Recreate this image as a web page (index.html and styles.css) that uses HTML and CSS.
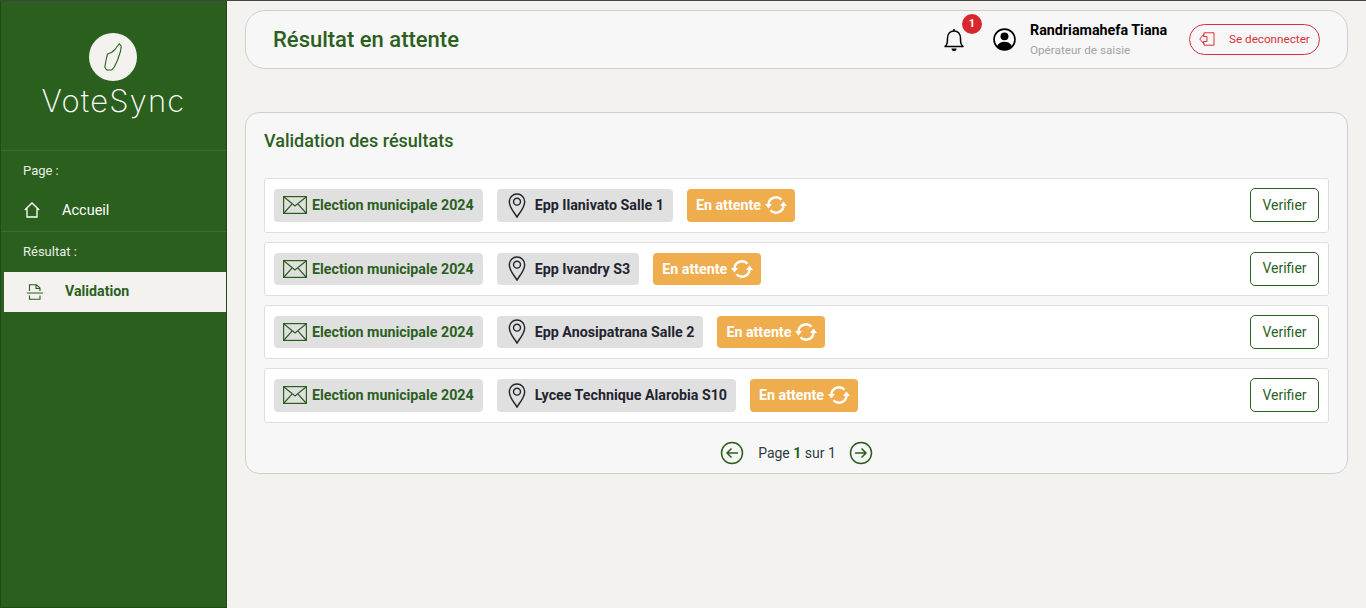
FILE: index.html
```html
<!DOCTYPE html>
<html lang="fr">
<head>
    <meta charset="UTF-8">
    <meta name="viewport" content="width=device-width, initial-scale=1.0">
    <title>VoteSync - Résultat en attente</title>
    <link rel="stylesheet" href="styles.css">
</head>
<body>
    <svg class="icon-defs" width="0" height="0">
        <symbol id="i-mail" viewBox="0 0 24 18">
            <rect x="0.6" y="0.6" width="22.8" height="16.8" fill="none" stroke="currentColor" stroke-width="1.2"/>
            <path d="M1 1l11 9 11-9M1 17l8.2-9.2M23 17l-8.2-9.2" fill="none" stroke="currentColor" stroke-width="1.2"/>
        </symbol>
        <symbol id="i-pin" viewBox="0 0 18 26">
            <path d="M9 25C6 20 1 15 1 9a8 8 0 0 1 16 0c0 6-5 11-8 16z" fill="none" stroke="currentColor" stroke-width="1.5"/>
            <circle cx="9" cy="9" r="3.6" fill="none" stroke="currentColor" stroke-width="1.5"/>
        </symbol>
        <symbol id="i-sync" viewBox="0 0 22 20">
            <path d="M3.5 10a7.5 7.5 0 0 1 13-5.2M18.5 10a7.5 7.5 0 0 1-13 5.2" fill="none" stroke="currentColor" stroke-width="2.4"/>
            <path d="M0 9h7l-3.500 4.500zM15 11h7l-3.500-4.500z" fill="currentColor"/>
        </symbol>
        <symbol id="i-left" viewBox="0 0 24 24">
            <circle cx="12" cy="12" r="10.500" fill="none" stroke="currentColor" stroke-width="1.500"/>
            <path d="M18 12H7M11.500 7.500L7 12l4.500 4.500" fill="none" stroke="currentColor" stroke-width="1.500"/>
        </symbol>
        <symbol id="i-right" viewBox="0 0 24 24">
            <circle cx="12" cy="12" r="10.500" fill="none" stroke="currentColor" stroke-width="1.500"/>
            <path d="M6 12h11M12.500 7.500L17 12l-4.500 4.500" fill="none" stroke="currentColor" stroke-width="1.500"/>
        </symbol>
    </svg>

    <div class="layout">
        <!-- Sidebar -->
        <aside class="sidebar">
            <div class="brand">
                <div class="brand-logo">
                    <svg width="18" height="28" viewBox="0 0 18 28">
                        <path d="M15.300.8L17.200 3l-.6 5-1 3-2.300 6.700-3 6.300-2.600 3h-5L.8 24.300l.7-4.300 1-5 1-4 4-1.500L11 6.500 13.500 3z" fill="none" stroke="#2b5f1e" stroke-width="1.100" stroke-linejoin="round"/>
                    </svg>
                </div>
                <div class="brand-name">VoteSync</div>
            </div>
            <div class="nav-group">
                <div class="nav-label">Page :</div>
                <a class="nav-link">
                    <svg width="16" height="16" viewBox="0 0 16 16"><path d="M.8 8L8 1l7.200 7M3 6.500V15h10V6.500" fill="none" stroke="currentColor" stroke-width="1.300"/></svg>
                    <span>Accueil</span>
                </a>
            </div>
            <div class="nav-group">
                <div class="nav-label">Résultat :</div>
                <a class="nav-link active">
                    <svg width="16" height="16" viewBox="0 0 16 16"><path d="M2.500 7V.8h7L13 4v3M0 9h16M2.500 11.500v3.700h10.500v-3.700M9 1v3.500h4" fill="none" stroke="currentColor" stroke-width="1.100"/></svg>
                    <span>Validation</span>
                </a>
            </div>
        </aside>

        <main class="content">
            <!-- Header -->
            <header class="topbar">
                <h1>Résultat en attente</h1>
                <div class="notif">
                    <svg width="20" height="24" viewBox="0 0 20 24"><path d="M1 18.500c2-2 2.500-3 2.500-8C3.500 6 6 3 10 3s6.500 3 6.500 7.500c0 5 .5 6 2.500 8z" fill="none" stroke="#000" stroke-width="1.500" stroke-linejoin="round"/><path d="M10 1v2" stroke="#000" stroke-width="1.500"/><path d="M7.500 20.500h5a2.500 2.500 0 0 1-5 0z" fill="#000"/></svg>
                    <span class="badge">1</span>
                </div>
                <svg class="avatar" width="23" height="23" viewBox="0 0 22 22"><circle cx="11" cy="11" r="10" fill="#fff" stroke="#000" stroke-width="1.600"/><circle cx="11" cy="8" r="3.800"/><path d="M3.800 17.500c1.500-3 4-4.300 7.200-4.300s5.700 1.300 7.200 4.300A10 10 0 0 1 11 21a10 10 0 0 1-7.200-3.500z"/></svg>
                <div class="user">
                    <div class="user-name">Randriamahefa Tiana</div>
                    <div class="user-role">Opérateur de saisie</div>
                </div>
                <button class="logout">
                    <svg width="16" height="14" viewBox="0 0 16 14"><path d="M5 3.500V.8h10v12.400H5v-2.700M8 4.500H4.500V2.500L.8 7l3.700 4.500v-2H8z" fill="none" stroke="#d9303a" stroke-width="1"/></svg>
                    <span>Se deconnecter</span>
                </button>
            </header>

            <!-- Validation list -->
            <section class="panel">
                <h2>Validation des résultats</h2>
                <div class="rows">
                    <div class="row">
                        <span class="tag tag-election"><svg width="24" height="18"><use href="#i-mail"/></svg>Election municipale 2024</span>
                        <span class="tag tag-place"><svg width="18" height="25"><use href="#i-pin"/></svg>Epp Ilanivato Salle 1</span>
                        <span class="tag tag-status">En attente<svg width="22" height="20"><use href="#i-sync"/></svg></span>
                        <button class="verify">Verifier</button>
                    </div>
                    <div class="row">
                        <span class="tag tag-election"><svg width="24" height="18"><use href="#i-mail"/></svg>Election municipale 2024</span>
                        <span class="tag tag-place"><svg width="18" height="25"><use href="#i-pin"/></svg>Epp Ivandry S3</span>
                        <span class="tag tag-status">En attente<svg width="22" height="20"><use href="#i-sync"/></svg></span>
                        <button class="verify">Verifier</button>
                    </div>
                    <div class="row">
                        <span class="tag tag-election"><svg width="24" height="18"><use href="#i-mail"/></svg>Election municipale 2024</span>
                        <span class="tag tag-place"><svg width="18" height="25"><use href="#i-pin"/></svg>Epp Anosipatrana Salle 2</span>
                        <span class="tag tag-status">En attente<svg width="22" height="20"><use href="#i-sync"/></svg></span>
                        <button class="verify">Verifier</button>
                    </div>
                    <div class="row">
                        <span class="tag tag-election"><svg width="24" height="18"><use href="#i-mail"/></svg>Election municipale 2024</span>
                        <span class="tag tag-place"><svg width="18" height="25"><use href="#i-pin"/></svg>Lycee Technique Alarobia S10</span>
                        <span class="tag tag-status">En attente<svg width="22" height="20"><use href="#i-sync"/></svg></span>
                        <button class="verify">Verifier</button>
                    </div>
                </div>
                <div class="pager">
                    <svg width="24" height="24"><use href="#i-left"/></svg>
                    <span class="pager-text">Page <b>1</b> sur 1</span>
                    <svg width="24" height="24"><use href="#i-right"/></svg>
                </div>
            </section>
        </main>
    </div>
</body>
</html>
```

FILE: styles.css
```css
* {
    box-sizing: border-box;
}
body {
    font-family: Roboto, Arial, sans-serif;
    background-color: #f3f2ef;
    margin: 0;
    height: 100vh;
    overflow: hidden;
    border-top: 1px solid #444;
}
.icon-defs {
    display: block;
    height: 0;
}
.layout {
    display: flex;
    height: 100%;
}

/* Sidebar */
.sidebar {
    width: 227px;
    flex-shrink: 0;
    background: #2b5f1e;
    border-left: 1px solid #1f4a15;
    border-right: 1px solid #1f4a15;
    border-bottom: 1px solid #1f4a15;
    color: #fff;
}
.brand {
    height: 149px;
    padding-top: 32px;
    display: flex;
    flex-direction: column;
    align-items: center;
}
.brand-logo {
    width: 48px;
    height: 48px;
    margin-right: 1px;
    border-radius: 50%;
    background: #f3f2ef;
    display: flex;
    align-items: center;
    justify-content: center;
}
.brand-name {
    font-family: Inter, sans-serif;
    font-weight: 200;
    font-size: 31px;
    line-height: 38px;
    margin-top: 1px;
    letter-spacing: 1.2px;
    color: #fff;
}
.nav-group {
    border-top: 1px solid #3a6d2d;
}
.nav-label {
    font-size: 13px;
    line-height: 15px;
    padding: 12px 0 0 22px;
    color: #e9eee6;
}
.nav-link {
    display: flex;
    align-items: center;
    gap: 22px;
    height: 41px;
    margin-top: 12px;
    padding: 0 0 1px 23px;
    font-size: 14.500px;
    color: #fff;
}
.nav-link.active {
    height: 40px;
    margin: 13px 0 0 3px;
    padding: 0 0 0 23px;
    background: #f3f2ef;
    color: #2b5f1e;
    font-size: 14.200px;
    font-weight: 700;
}
.nav-link.active span {
    margin-bottom: 2px;
}

/* Main */
.content {
    flex: 1;
    padding: 9px 18px 0;
}
.topbar {
    height: 59px;
    display: flex;
    align-items: center;
    padding: 0 27px;
    background: #f7f7f7;
    border: 1px solid #cfcfcf;
    border-radius: 20px;
}
.topbar h1 {
    margin: 0 auto 0 0;
    font-size: 22px;
    font-weight: 500;
    color: #2b5f1e;
}
.notif {
    position: relative;
    width: 20px;
    height: 24px;
    margin-right: 29px;
}
.badge {
    position: absolute;
    top: -14px;
    left: 18px;
    width: 20px;
    height: 20px;
    border-radius: 50%;
    background: #d8282f;
    color: #fff;
    font-size: 11px;
    font-weight: 700;
    text-align: center;
    line-height: 20px;
}
.avatar {
    margin-right: 14px;
}
.user {
    width: 137px;
    margin-right: 22px;
}
.user-name {
    font-size: 14.300px;
    font-weight: 700;
    line-height: 18px;
    white-space: nowrap;
    color: #000;
}
.user-role {
    font-size: 11.700px;
    line-height: 16px;
    margin-top: 3px;
    color: #a3a3a3;
}
.logout {
    display: flex;
    align-items: center;
    gap: 14px;
    width: 131px;
    height: 31px;
    padding: 0 0 2px 9px;
    background: transparent;
    border: 1px solid #d9303a;
    border-radius: 16px;
    color: #d9303a;
    font-family: inherit;
    font-size: 11.700px;
}
.panel {
    margin-top: 43px;
    height: 362px;
    padding: 0 18px;
    background: #f7f7f7;
    border: 1px solid #cfcfcf;
    border-radius: 14px;
}
.panel h2 {
    margin: 0;
    padding-top: 17px;
    height: 65.330px;
    font-size: 18px;
    line-height: 22px;
    font-weight: 500;
    color: #2b5f1e;
}
.rows {
    display: flex;
    flex-direction: column;
    gap: 9px;
}
.row {
    display: flex;
    align-items: center;
    gap: 14px;
    height: 54.330px;
    padding: 0 9px;
    background: #fff;
    border: 1px solid #dedede;
    border-radius: 3px;
}
.tag {
    display: flex;
    align-items: center;
    height: 32.500px;
    padding: 0 9px 0.600px;
    border-radius: 4px;
    font-size: 14.250px;
    font-weight: 700;
    white-space: nowrap;
}
.tag-election {
    gap: 5px;
    background: #e0e0e0;
    color: #2b5f1e;
}
.tag-place {
    gap: 9px;
    padding-left: 11px;
    background: #e0e0e0;
    color: #22242e;
}
.tag-status {
    gap: 4px;
    padding-right: 8px;
    background: #f0ad4e;
    color: #fff;
}
.verify {
    width: 69px;
    height: 34px;
    margin-left: auto;
    padding: 0 0 1px;
    background: #fff;
    border: 1px solid #2b5f1e;
    border-radius: 5px;
    color: #2b5f1e;
    font-family: inherit;
    font-size: 14px;
}
.pager {
    display: flex;
    align-items: center;
    justify-content: center;
    gap: 13px;
    margin-top: 18px;
    color: #2b5f1e;
}
.pager-text {
    margin-left: 1px;
    font-size: 14px;
    color: #2f3b45;
}
.pager-text b {
    color: #2b5f1e;
}
```
